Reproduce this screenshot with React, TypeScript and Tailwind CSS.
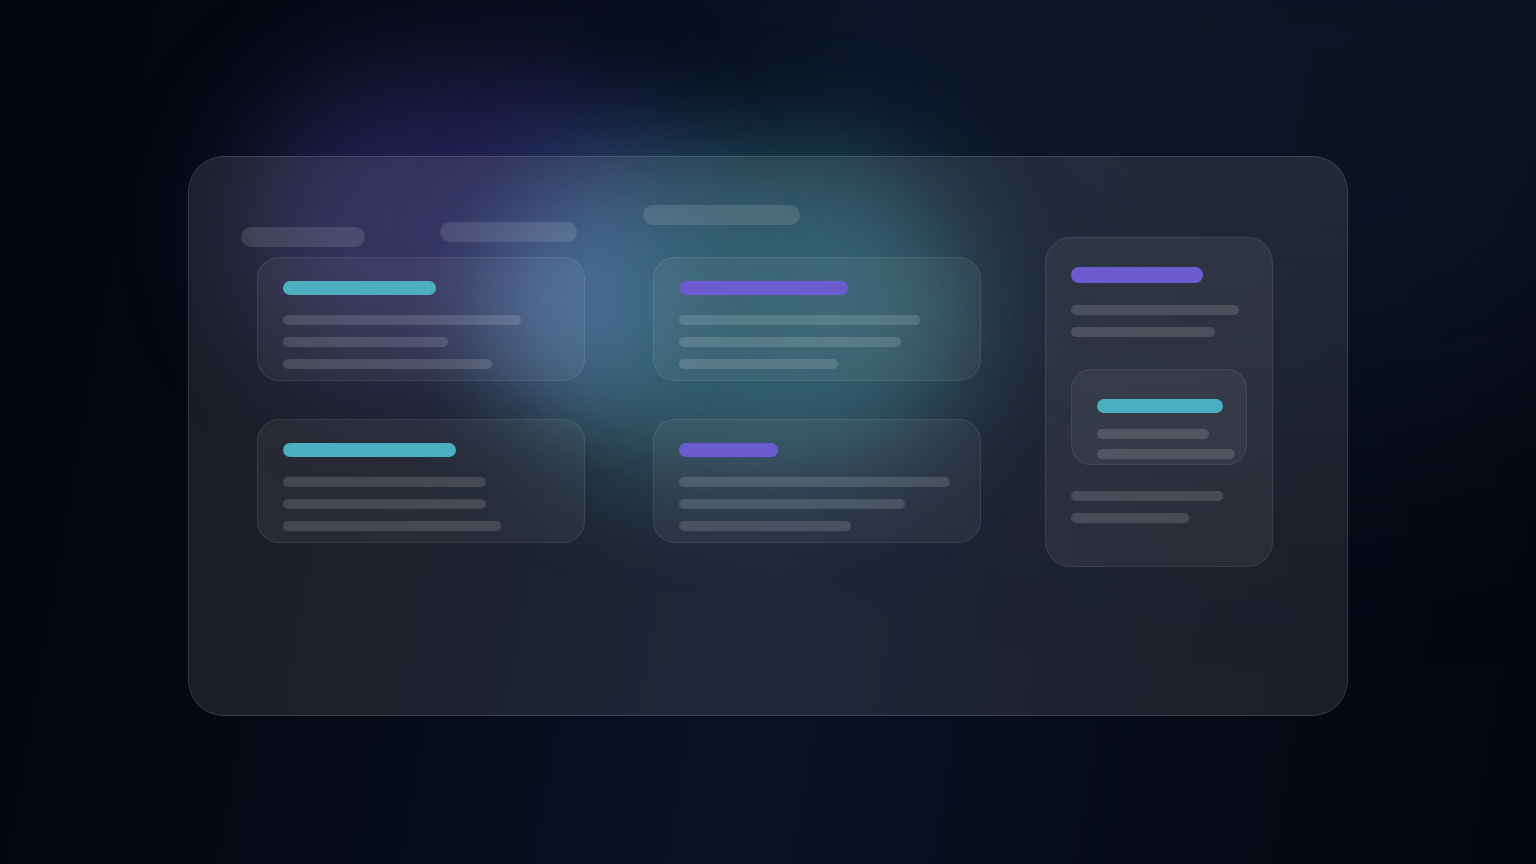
import React from 'react';

type Line = { w: number };

const teal = 'bg-[#4aafbe]';
const purple = 'bg-[#6b5bcf]';

const SkeletonCard = ({ accent, title, lines }: { accent: string; title: number; lines: Line[] }) => (
  <div className="h-[124px] w-[328px] rounded-[22px] border border-white/[0.09] bg-white/[0.05] pl-[25px] pt-[23px]">
    <div className={`h-[14px] rounded-full ${accent}`} style={{ width: title }} />
    <div className="mt-5 flex flex-col gap-3">
      {lines.map((l, i) => (
        <div key={i} className="h-[10px] rounded-full bg-white/[0.14]" style={{ width: l.w }} />
      ))}
    </div>
  </div>
);

const SideCard = () => (
  <div className="ml-16 mt-20 h-[330px] w-[228px] shrink-0 rounded-[26px] border border-white/[0.09] bg-white/[0.06] pl-[25px] pt-[29px]">
    <div className={`h-4 w-[132px] rounded-full ${purple}`} />
    <div className="mt-[22px] h-[10px] w-[168px] rounded-full bg-white/[0.14]" />
    <div className="mt-3 h-[10px] w-[144px] rounded-full bg-white/[0.14]" />
    <div className="mt-8 h-24 w-[176px] rounded-[20px] border border-white/[0.08] bg-white/[0.05] pl-[25px] pt-[29px]">
      <div className={`h-[14px] w-[126px] rounded-full ${teal}`} />
      <div className="mt-4 h-[10px] w-[112px] rounded-full bg-white/[0.14]" />
      <div className="mt-[10px] h-[10px] w-[138px] rounded-full bg-white/[0.14]" />
    </div>
    <div className="mt-[26px] h-[10px] w-[152px] rounded-full bg-white/[0.14]" />
    <div className="mt-3 h-[10px] w-[118px] rounded-full bg-white/[0.14]" />
  </div>
);

export default function App() {
  return (
    <div className="relative flex h-[864px] w-full items-center justify-center overflow-hidden bg-[linear-gradient(100deg,#03050c_0%,#060b18_30%,#0a1226_52%,#070c1a_72%,#03060e_100%)] pt-2 font-['Inter',sans-serif]">
      {/* top-right haze */}
      <div className="pointer-events-none absolute right-[-200px] top-[-200px] h-[600px] w-[900px] rounded-full bg-[#16223a]/40 blur-[120px]" />

      {/* glow blobs */}
      <div className="pointer-events-none absolute left-[245px] top-[80px] h-[290px] w-[430px] rounded-full bg-[#5a48c0]/35 blur-[60px]" />
      <div className="pointer-events-none absolute left-[500px] top-[150px] h-[320px] w-[470px] rounded-full bg-[#3a9eac]/45 blur-[55px]" />
      <div className="pointer-events-none absolute left-[480px] top-[230px] h-[170px] w-[180px] rounded-full bg-[#6a86d8]/20 blur-[40px]" />

      <div className="relative flex h-[560px] w-[1160px] items-start rounded-[36px] border border-white/[0.12] bg-white/[0.09]">
        <div className="flex flex-col pt-12">
          <div className="flex items-start">
            <div className="ml-[52px] mt-[22px] h-5 w-[124px] rounded-full bg-white/[0.12]" />
            <div className="ml-[75px] mt-[17px] h-5 w-[137px] rounded-full bg-white/[0.12]" />
            <div className="ml-[66px] h-5 w-[157px] rounded-full bg-white/[0.12]" />
          </div>
          <div className="ml-[68px] mt-[10px] grid grid-cols-[328px_328px] gap-x-[68px] gap-y-[38px]">
            <SkeletonCard accent={teal} title={153} lines={[{ w: 238 }, { w: 165 }, { w: 209 }]} />
            <SkeletonCard accent={purple} title={169} lines={[{ w: 241 }, { w: 222 }, { w: 159 }]} />
            <SkeletonCard accent={teal} title={173} lines={[{ w: 203 }, { w: 203 }, { w: 218 }]} />
            <SkeletonCard accent={purple} title={99} lines={[{ w: 271 }, { w: 226 }, { w: 172 }]} />
          </div>
        </div>
        <SideCard />
      </div>
    </div>
  );
}
